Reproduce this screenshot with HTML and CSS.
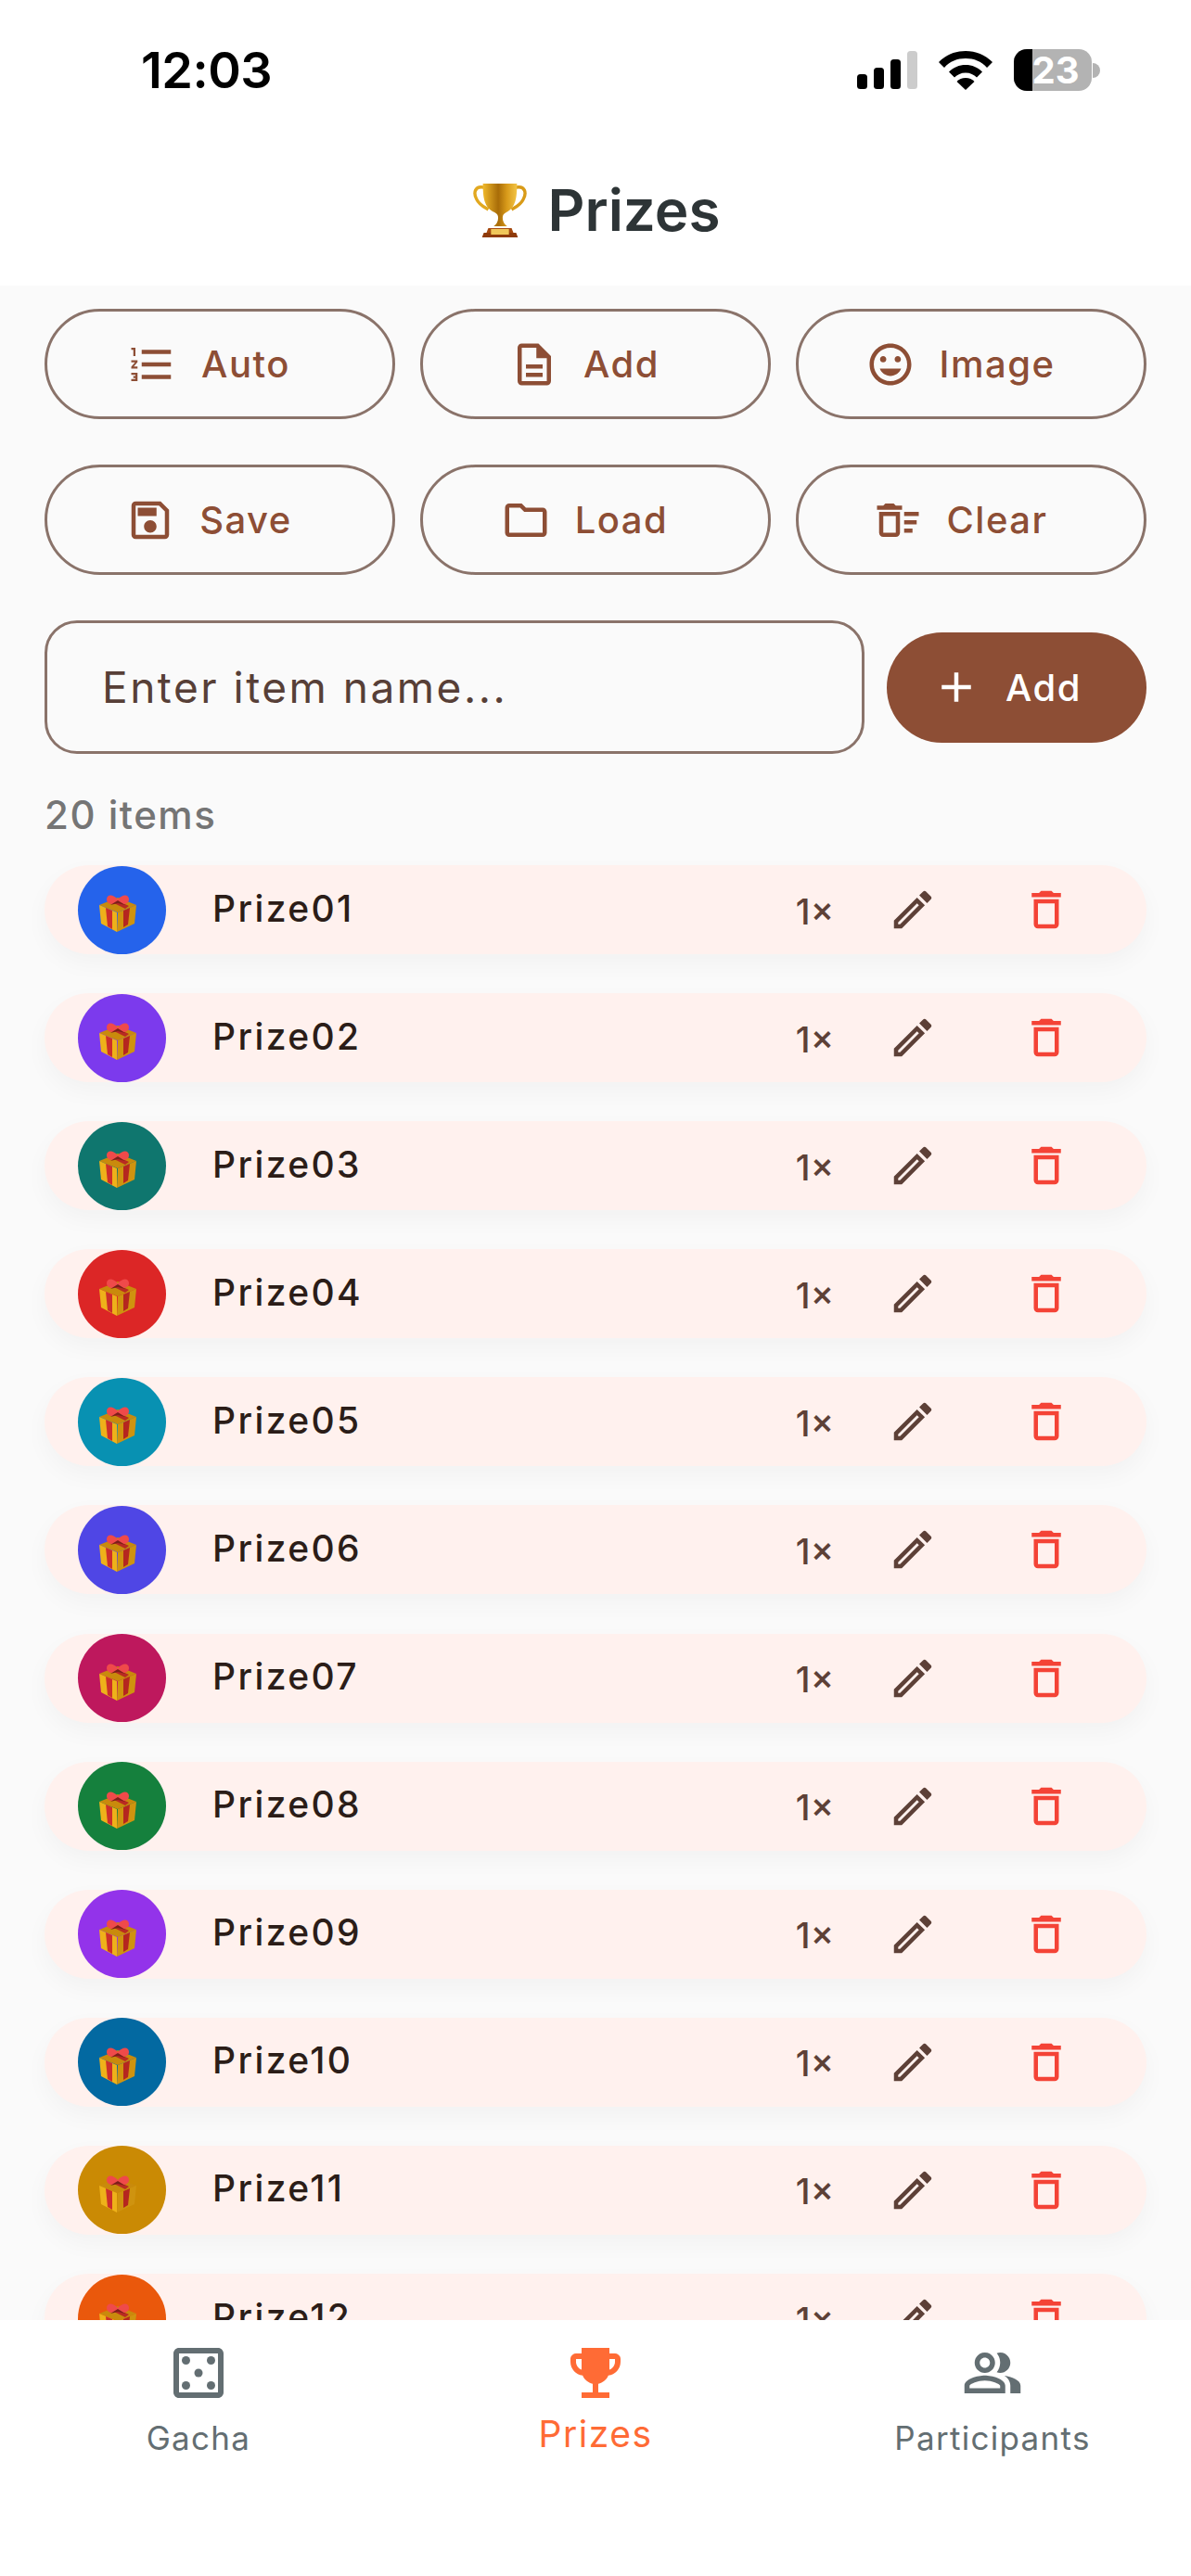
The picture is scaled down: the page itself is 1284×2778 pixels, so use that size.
FILE: index.html
```html
<!DOCTYPE html>
<html lang="en">
<head>
  <meta charset="UTF-8" />
  <meta name="viewport" content="width=device-width, initial-scale=1.0" />
  <title>Prizes</title>
  <link rel="stylesheet" href="styles.css">
</head>
<body>
<svg class="defs" width="0" height="0">
  <defs>
    <linearGradient id="gold" x1="0" x2="1" y1="0" y2="0">
      <stop offset="0" stop-color="#f0b92c"/><stop offset=".45" stop-color="#a86c08"/><stop offset=".7" stop-color="#d89a1a"/><stop offset="1" stop-color="#f3c445"/>
    </linearGradient>
    <symbol id="gift" viewBox="0 0 42 42">
      <path d="M21 5 41 13 21 21 1 13z" fill="#c98a0c"/>
      <path d="M1 13 20 21 20 42 3 33z" fill="#eeb11a"/>
      <path d="M41 13 21 21 20 42 39 33z" fill="#cf930f"/>
      <path d="M8 16 15 19 15 39 10 36z" fill="#cc2f2a"/>
      <path d="M27 19 34 16 32 34 27 37z" fill="#b5261f"/>
      <path d="M13 9 29 17 33 14 18 7z" fill="#b82a22"/>
      <path d="M21 9C16 14 9 12 9 7 9 1 16 1 21 7 26 1 33 1 33 7 33 12 26 14 21 9z" fill="#ef4a4a"/>
      <path d="M13 13 21 8 29 13 21 11z" fill="#7c1f1a"/>
    </symbol>
    <symbol id="edit" viewBox="0 0 24 24">
      <path d="M14.06 9.02l.92.92L5.92 19H5v-.92l9.06-9.06M17.66 3c-.25 0-.51.1-.7.29l-1.83 1.83 3.75 3.75 1.83-1.83c.39-.39.39-1.02 0-1.41l-2.34-2.34c-.2-.2-.45-.29-.71-.29zm-3.6 3.19L3 17.25V21h3.75L17.81 9.94l-3.75-3.75z"/>
    </symbol>
    <symbol id="trash" viewBox="0 0 24 24">
      <path d="M16 9v10H8V9h8m-1.5-6h-5l-1 1H5v2h14V4h-3.5l-1-1zM18 7H6v12c0 1.1.9 2 2 2h8c1.1 0 2-.9 2-2V7z"/>
    </symbol>
  </defs>
</svg>

<div class="phone">
  <!-- status bar -->
  <div class="status">
    <span class="time">12:03</span>
    <div class="status-icons">
      <svg width="65" height="41" viewBox="0 0 65 41">
        <rect x="0" y="25" width="11" height="16" rx="3.5"/>
        <rect x="18" y="18" width="11" height="23" rx="3.5"/>
        <rect x="36" y="9" width="11" height="32" rx="3.5"/>
        <rect x="54" y="0" width="11" height="41" rx="3.5" fill="#ccc"/>
      </svg>
      <svg class="wifi" width="58" height="42" viewBox="0 0 58 42">
        <path d="M29 0C18 0 8 4 0 12l6 6C12 11 20 8 29 8s17 3 23 10l6-6C50 4 40 0 29 0z"/>
        <path d="M29 15c-7 0-13 2.500-18 7.500l6 6c3-3 7-5 12-5s9 2 12 5l6-6C42 17.500 36 15 29 15z"/>
        <path d="M29 29c-4 0-7 1.500-9.500 4L29 42l9.500-9C36 30.500 33 29 29 29z"/>
      </svg>
      <div class="battery">
        <div class="battery-body"><div class="battery-level"></div><span>23</span></div>
        <div class="battery-nub"></div>
      </div>
    </div>
  </div>

  <!-- header -->
  <header class="title">
    <svg class="trophy" width="58" height="60" viewBox="0 0 60 60" preserveAspectRatio="none">
      <path d="M12 6C2 4 0 12 4 19c3 6 8 8 13 11" fill="none" stroke="#e2a820" stroke-width="3.500"/>
      <path d="M48 6c10-2 12 6 8 13-3 6-8 8-13 11" fill="none" stroke="#d99b18" stroke-width="3.500"/>
      <path d="M11 2h38c0 14-1 26-12 31-3 1.500-4 3-4 6 0 4 2 7 5 9H23c3-2 5-5 5-9 0-3-1-4.500-4-6C12 28 11 16 11 2z" fill="url(#gold)"/>
      <path d="M17 50h26l2 5H15z" fill="#a5490f"/>
      <path d="M12 55h36l2 5H10z" fill="#8e3a0a"/>
      <rect x="20" y="51" width="20" height="6" fill="#f0c75a"/>
    </svg>
    <h1>Prizes</h1>
  </header>

  <main class="content">
    <div class="actions">
      <button class="btn-outline">
        <svg viewBox="0 0 24 24"><path d="M2 17h2v.5H3v1h1v.5H2v1h3v-4H2zm1-9h1V4H2v1h1v3zm-1 3h1.800L2 13.100v.9h3v-1H3.200L5 10.900V10H2v1zm5-6v2h14V5H7zm0 14h14v-2H7v2zm0-6h14v-2H7v2z"/></svg>
        Auto
      </button>
      <button class="btn-outline">
        <svg viewBox="0 0 24 24"><path d="M8 16h8v2H8zm0-4h8v2H8zm6-10H6c-1.100 0-2 .9-2 2v16c0 1.100.89 2 1.990 2H18c1.100 0 2-.9 2-2V8l-6-6zm4 18H6V4h7v5h5v11z"/></svg>
        Add
      </button>
      <button class="btn-outline">
        <svg viewBox="0 0 24 24"><path d="M11.990 2C6.470 2 2 6.480 2 12s4.470 10 9.990 10C17.520 22 22 17.520 22 12S17.520 2 11.990 2zM12 20c-4.420 0-8-3.580-8-8s3.580-8 8-8 8 3.580 8 8-3.580 8-8 8zm3.500-9c.83 0 1.500-.67 1.500-1.500S16.330 8 15.500 8 14 8.670 14 9.500s.67 1.500 1.500 1.500zm-7 0c.83 0 1.500-.67 1.500-1.500S9.330 8 8.500 8 7 8.670 7 9.500 7.670 11 8.500 11zm3.500 6.500c2.330 0 4.310-1.460 5.110-3.500H6.890c.8 2.040 2.780 3.500 5.110 3.500z"/></svg>
        Image
      </button>
      <button class="btn-outline">
        <svg viewBox="0 0 24 24"><path d="M17 3H5c-1.110 0-2 .9-2 2v14c0 1.100.89 2 2 2h14c1.100 0 2-.9 2-2V7l-4-4zm2 16H5V5h11.170L19 7.830V19zm-7-7c-1.660 0-3 1.340-3 3s1.340 3 3 3 3-1.340 3-3-1.340-3-3-3zM6 6h9v4H6z"/></svg>
        Save
      </button>
      <button class="btn-outline">
        <svg viewBox="0 0 24 24"><path d="M9.170 6l2 2H20v10H4V6h5.170M10 4H4c-1.100 0-1.990.9-1.990 2L2 18c0 1.100.9 2 2 2h16c1.100 0 2-.9 2-2V8c0-1.100-.9-2-2-2h-8l-2-2z"/></svg>
        Load
      </button>
      <button class="btn-outline">
        <svg viewBox="0 0 24 24"><path d="M15 16h4v2h-4zm0-8h7v2h-7zm0 4h6v2h-6zM3 18c0 1.100.9 2 2 2h6c1.100 0 2-.9 2-2V8H3v10zm2-8h6v8H5v-8zm5-6H6L5 5H2v2h12V5h-3z"/></svg>
        Clear
      </button>
    </div>

    <div class="add-row">
      <div class="name-input">Enter item name...</div>
      <button class="btn-add">
        <svg viewBox="0 0 24 24"><path d="M19 13h-6v6h-2v-6H5v-2h6V5h2v6h6v2z"/></svg>
        Add
      </button>
    </div>

    <div class="count">20 items</div>

    <div class="list">
      <div class="row"><span class="avatar c1"><svg><use href="#gift"/></svg></span><span class="name">Prize01</span><span class="qty">1×</span><svg class="ico-edit"><use href="#edit"/></svg><svg class="ico-trash"><use href="#trash"/></svg></div>
      <div class="row"><span class="avatar c2"><svg><use href="#gift"/></svg></span><span class="name">Prize02</span><span class="qty">1×</span><svg class="ico-edit"><use href="#edit"/></svg><svg class="ico-trash"><use href="#trash"/></svg></div>
      <div class="row"><span class="avatar c3"><svg><use href="#gift"/></svg></span><span class="name">Prize03</span><span class="qty">1×</span><svg class="ico-edit"><use href="#edit"/></svg><svg class="ico-trash"><use href="#trash"/></svg></div>
      <div class="row"><span class="avatar c4"><svg><use href="#gift"/></svg></span><span class="name">Prize04</span><span class="qty">1×</span><svg class="ico-edit"><use href="#edit"/></svg><svg class="ico-trash"><use href="#trash"/></svg></div>
      <div class="row"><span class="avatar c5"><svg><use href="#gift"/></svg></span><span class="name">Prize05</span><span class="qty">1×</span><svg class="ico-edit"><use href="#edit"/></svg><svg class="ico-trash"><use href="#trash"/></svg></div>
      <div class="row"><span class="avatar c6"><svg><use href="#gift"/></svg></span><span class="name">Prize06</span><span class="qty">1×</span><svg class="ico-edit"><use href="#edit"/></svg><svg class="ico-trash"><use href="#trash"/></svg></div>
      <div class="row"><span class="avatar c7"><svg><use href="#gift"/></svg></span><span class="name">Prize07</span><span class="qty">1×</span><svg class="ico-edit"><use href="#edit"/></svg><svg class="ico-trash"><use href="#trash"/></svg></div>
      <div class="row"><span class="avatar c8"><svg><use href="#gift"/></svg></span><span class="name">Prize08</span><span class="qty">1×</span><svg class="ico-edit"><use href="#edit"/></svg><svg class="ico-trash"><use href="#trash"/></svg></div>
      <div class="row"><span class="avatar c9"><svg><use href="#gift"/></svg></span><span class="name">Prize09</span><span class="qty">1×</span><svg class="ico-edit"><use href="#edit"/></svg><svg class="ico-trash"><use href="#trash"/></svg></div>
      <div class="row"><span class="avatar c10"><svg><use href="#gift"/></svg></span><span class="name">Prize10</span><span class="qty">1×</span><svg class="ico-edit"><use href="#edit"/></svg><svg class="ico-trash"><use href="#trash"/></svg></div>
      <div class="row"><span class="avatar c11"><svg><use href="#gift"/></svg></span><span class="name">Prize11</span><span class="qty">1×</span><svg class="ico-edit"><use href="#edit"/></svg><svg class="ico-trash"><use href="#trash"/></svg></div>
      <div class="row"><span class="avatar c12"><svg><use href="#gift"/></svg></span><span class="name">Prize12</span><span class="qty">1×</span><svg class="ico-edit"><use href="#edit"/></svg><svg class="ico-trash"><use href="#trash"/></svg></div>
    </div>
  </main>

  <!-- bottom tabs -->
  <nav class="tabs">
    <div class="tab">
      <svg viewBox="0 0 24 24"><path d="M19 3H5c-1.100 0-2 .9-2 2v14c0 1.100.9 2 2 2h14c1.100 0 2-.9 2-2V5c0-1.100-.9-2-2-2zm0 16H5V5h14v14z"/><circle cx="7.500" cy="16.500" r="1.500"/><circle cx="7.500" cy="7.500" r="1.500"/><circle cx="12" cy="12" r="1.500"/><circle cx="16.500" cy="16.500" r="1.500"/><circle cx="16.500" cy="7.500" r="1.500"/></svg>
      <span>Gacha</span>
    </div>
    <div class="tab active">
      <svg viewBox="0 0 24 24"><path d="M19 5h-2V3H7v2H5c-1.100 0-2 .9-2 2v1c0 2.550 1.920 4.630 4.390 4.940.63 1.500 1.980 2.630 3.610 2.960V19H7v2h10v-2h-4v-3.100c1.630-.33 2.980-1.460 3.610-2.960C19.080 12.630 21 10.550 21 8V7c0-1.100-.9-2-2-2zM5 8V7h2v3.820C5.840 10.400 5 9.300 5 8zm14 0c0 1.300-.84 2.400-2 2.820V7h2v1z"/></svg>
      <span>Prizes</span>
    </div>
    <div class="tab">
      <svg class="people" viewBox="0 0 24 24"><path d="M16.670 13.130C18.040 14.060 19 15.320 19 17v3h4v-3c0-2.180-3.570-3.470-6.330-3.870z"/><path d="M15 12c2.210 0 4-1.790 4-4s-1.790-4-4-4c-.47 0-.91.1-1.330.24C14.500 5.270 15 6.580 15 8s-.5 2.730-1.330 3.760c.42.14.86.24 1.330.24z"/><path d="M9 12c2.210 0 4-1.790 4-4s-1.790-4-4-4-4 1.790-4 4 1.790 4 4 4zm0-6c1.100 0 2 .9 2 2s-.9 2-2 2-2-.9-2-2 .9-2 2-2z"/><path d="M9 13c-2.670 0-8 1.340-8 4v3h16v-3c0-2.660-5.330-4-8-4zm6 5H3v-.99C3.200 16.290 6.300 15 9 15s5.800 1.290 6 2v1z"/></svg>
      <span>Participants</span>
    </div>
  </nav>
</div>
</body>
</html>
```

FILE: styles.css
```css
html,body{margin:0;padding:0;background:#fff;font-family:'Inter','Liberation Sans',sans-serif;}
.defs{position:absolute;}
.phone{width:1284px;height:2778px;display:flex;flex-direction:column;overflow:hidden;}

/* status bar */
.status{height:150px;box-sizing:border-box;padding:53px 98px 0 152px;display:flex;justify-content:space-between;align-items:flex-start;}
.time{font-size:54px;font-weight:600;line-height:46px;color:#000;letter-spacing:-.5px;}
.status-icons{display:flex;align-items:flex-start;}
.status-icons svg{margin-top:2px;}
.wifi{margin-left:23px;}
.battery{display:flex;align-items:center;margin-left:23px;}
.battery-body{position:relative;width:84px;height:45px;border-radius:14px;background:#b3b3b3;text-align:center;}
.battery-level{position:absolute;left:0;top:0;bottom:0;width:20px;background:#000;border-radius:14px 0 0 14px;}
.battery-body span{position:relative;font-size:40px;line-height:45px;font-weight:700;color:#fff;padding-left:6px;}
.battery-nub{width:8px;height:16px;margin-left:1px;background:#b3b3b3;border-radius:0 8px 8px 0;}

/* header */
.title{height:158px;display:flex;align-items:center;justify-content:center;gap:22px;padding:0 0 6px 3px;box-sizing:border-box;}
.title h1{margin:0;font-size:62px;font-weight:600;color:#2d3436;}

/* main */
.content{flex:1;min-height:0;overflow:hidden;background:#fafafa;padding:25px 48px 0 48px;}
.actions{display:grid;grid-template-columns:repeat(3,378px);gap:49px 27px;}
.btn-outline{height:119px;box-sizing:border-box;background:transparent;border:3px solid #8a736a;border-radius:60px;color:#8d4e35;font:500 40px 'Inter',sans-serif;letter-spacing:1.500px;display:flex;align-items:center;justify-content:center;gap:26px;padding:0 24px 0 0;}
.btn-outline svg{width:54px;height:54px;fill:#8d4e35;}

.add-row{display:flex;align-items:center;gap:24px;margin-top:49px;}
.name-input{flex:1;height:144px;box-sizing:border-box;border:3px solid #8a736a;border-radius:35px;padding-left:59px;display:flex;align-items:center;font-size:46px;letter-spacing:2.500px;color:#573f37;}
.btn-add{width:280px;height:119px;flex:none;border:none;border-radius:60px;background:#8d4e35;color:#fff;font:500 40px 'Inter',sans-serif;letter-spacing:1.500px;display:flex;align-items:center;justify-content:center;gap:26px;padding:0 22px 0 0;}
.btn-add svg{width:54px;height:54px;fill:#fff;}

.count{margin-top:42px;height:78px;font-size:42px;letter-spacing:1.500px;line-height:47px;color:#757575;font-weight:500;}

.list{display:flex;flex-direction:column;gap:42.100px;}
.row{flex:none;height:96px;border-radius:48px;background:#fff1ee;box-shadow:0 10px 26px rgba(0,0,0,.035);display:flex;align-items:center;padding:0 81px 0 36px;}
.avatar{width:95px;height:95px;border-radius:50%;flex:none;display:flex;align-items:center;justify-content:center;}
.avatar svg{width:42px;height:42px;margin:6px 10px 0 0;}
.name{flex:1;margin-left:50px;font-size:39px;font-weight:500;letter-spacing:2.400px;color:#2b1d18;margin-top:-4px;}
.qty{font-size:38px;font-weight:500;color:#5d4037;margin-right:58px;margin-top:3px;}
.ico-edit{width:54px;height:54px;fill:#5d4037;margin-right:90px;flex:none;}
.ico-trash{width:54px;height:54px;fill:#f44336;flex:none;}

.c1{background:#2563eb;}
.c2{background:#7c3aed;}
.c3{background:#0f766e;}
.c4{background:#dc2626;}
.c5{background:#0891b2;}
.c6{background:#4f46e5;}
.c7{background:#be185d;}
.c8{background:#15803d;}
.c9{background:#9333ea;}
.c10{background:#0369a1;}
.c11{background:#ca8a04;}
.c12{background:#ea580c;}

/* bottom tabs */
.tabs{flex:none;height:276px;box-sizing:border-box;background:#fff;padding-top:21px;display:grid;grid-template-columns:repeat(3,428px);position:relative;}
.tab{display:flex;flex-direction:column;align-items:center;color:#636e72;font-size:35px;letter-spacing:1.300px;}
.tab svg{width:72px;height:72px;fill:#636e72;}
.tab svg.people{width:66px;height:66px;margin:3px 0;}
.tab span{margin-top:12px;line-height:44px;}
.tab.active{color:#ff6b35;font-size:39px;letter-spacing:1.500px;}
.tab.active svg{fill:#ff6b35;}
.tab.active span{margin-top:6px;line-height:47px;}
```
